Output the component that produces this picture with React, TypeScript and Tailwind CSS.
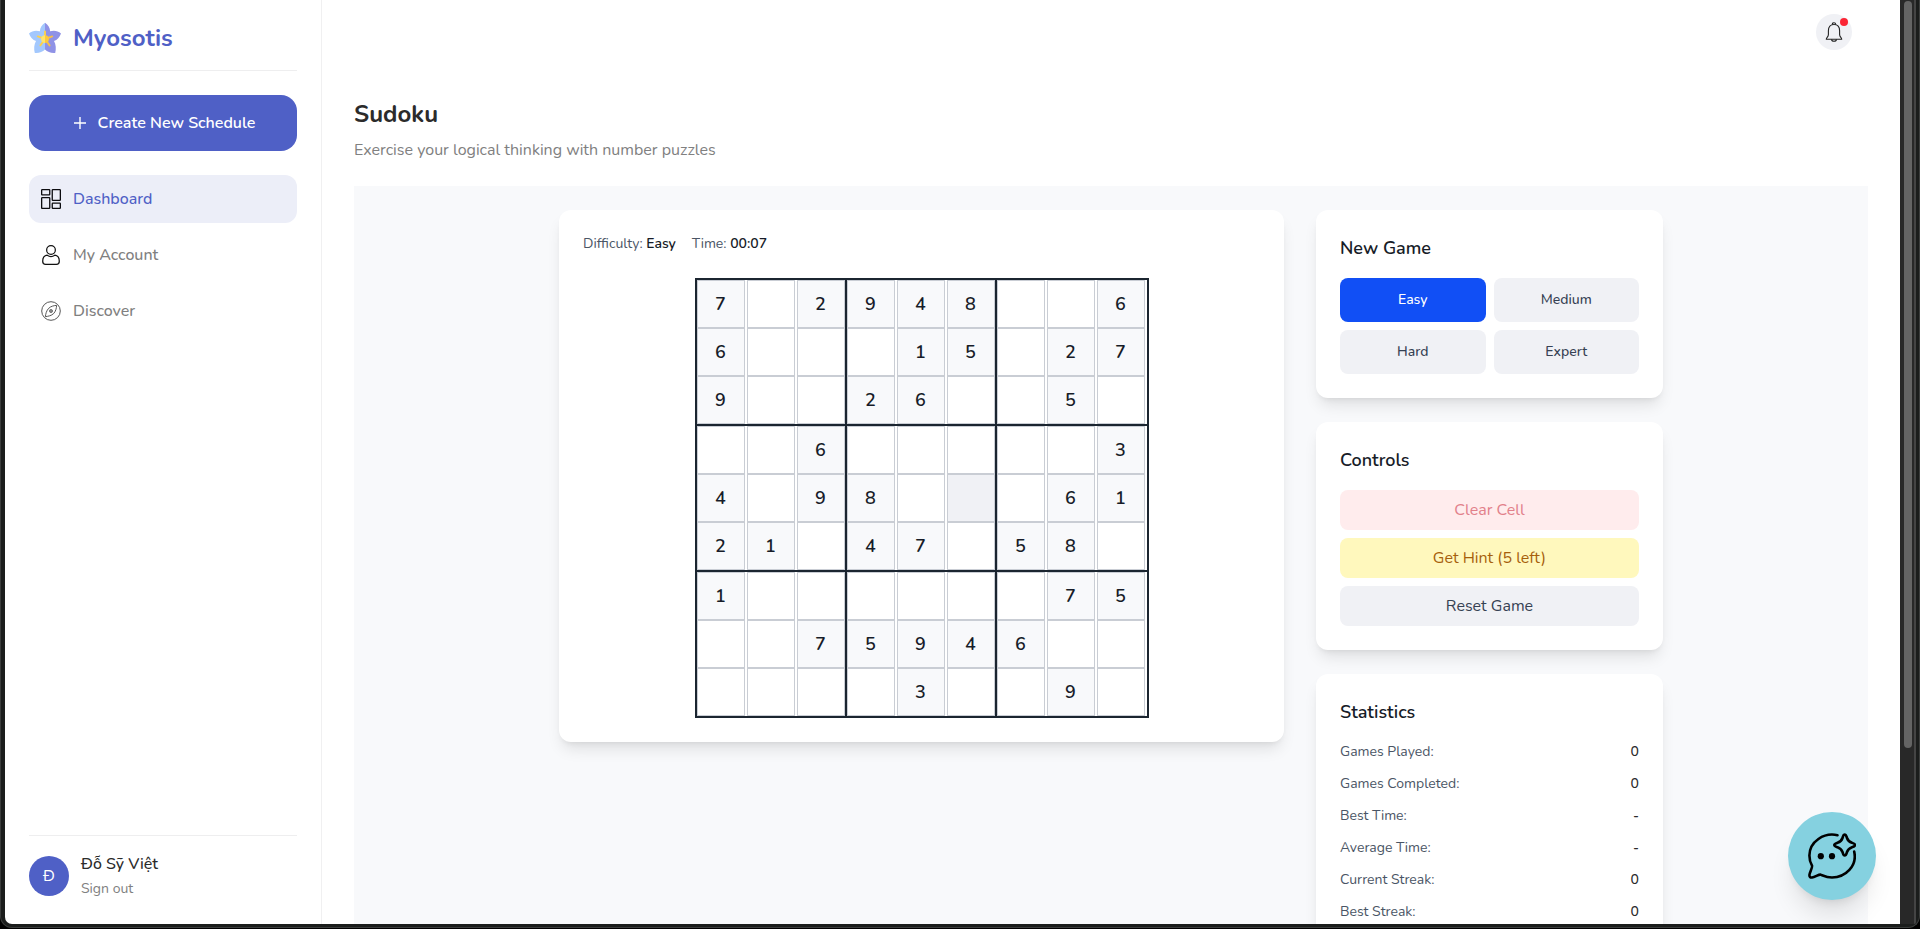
import React from "react";

const PUZZLE = [
  "7.2948..6",
  "6...15.27",
  "9..26..5.",
  "..6.....3",
  "4.98...61",
  "21.47.58.",
  "1......75",
  "..75946..",
  "....3..9.",
];

const STATS: [string, string][] = [
  ["Games Played:", "0"],
  ["Games Completed:", "0"],
  ["Best Time:", "-"],
  ["Average Time:", "-"],
  ["Current Streak:", "0"],
  ["Best Streak:", "0"],
];

function FlowerLogo() {
  return (
    <svg viewBox="0 0 32 32" className="size-8 shrink-0">
      <path d="M16 0.8 C12.800 2.800 11 6 10.900 9.300 C7 8 3 8.800 0 11.400 C1.200 15 3.800 17.800 7 19 C5 22.500 4.700 27 5.800 30.900 C9.800 31.300 13.500 30 16 27.600Z" fill="#a3c8fd" />
      <path d="M16 0.8 C19.200 2.800 21 6 21.100 9.300 C25 8 29 8.800 32 11.400 C30.800 15 28.200 17.800 25 19 C27 22.500 27.300 27 26.200 30.900 C22.200 31.300 18.500 30 16 27.600Z" fill="#8f92e6" />
      <path d="M16 9.500V17L8.800 14.400M16 17L11.400 23.400" stroke="#fbd04f" strokeWidth="1.900" strokeLinecap="round" fill="none" />
      <path d="M16 17L23.200 14.400M16 17L20.600 23.400" stroke="#f7bf47" strokeWidth="1.900" strokeLinecap="round" />
      <path d="M16 13.200A3.900 3.900 0 0 0 16 21Z" fill="#ffe56b" />
      <path d="M16 13.200A3.900 3.900 0 0 1 16 21Z" fill="#fcc93f" />
    </svg>
  );
}

function DashboardIcon() {
  return (
    <svg viewBox="0 0 20 20" className="size-5 shrink-0" fill="none" stroke="#0c0c10" strokeWidth="1.300">
      <rect x="0.650" y="0.650" width="8.100" height="5.200" rx="0.600" />
      <rect x="0.650" y="8.600" width="8.100" height="10.750" rx="0.600" />
      <rect x="11.250" y="0.650" width="8.100" height="10.750" rx="0.600" />
      <rect x="11.250" y="14.150" width="8.100" height="5.200" rx="0.600" />
    </svg>
  );
}

function UserIcon() {
  return (
    <svg viewBox="0 0 20 20" className="size-5 shrink-0" fill="none" stroke="#111" strokeWidth="1.250" strokeLinejoin="round">
      <circle cx="10" cy="5" r="4.350" />
      <path d="M6.200 10.200C3.300 10.600 1.700 13 1.700 16.200C1.700 18.300 2.600 19.350 4.600 19.350H15.400C17.400 19.350 18.300 18.300 18.300 16.200C18.300 13 16.700 10.600 13.800 10.200C12.600 11 11.400 11.500 10 11.500C8.600 11.500 7.400 11 6.200 10.200Z" />
    </svg>
  );
}

function CompassIcon() {
  return (
    <svg viewBox="0 0 20 20" className="size-5 shrink-0" fill="none" stroke="#444" strokeWidth="0.900">
      <circle cx="10" cy="10" r="9.300" />
      <path d="M15.600 4.400C13 4.500 9.700 5.300 7.700 7.300C5.500 9.500 4.600 13 4.400 15.600C7 15.400 10.500 14.700 12.700 12.500C14.700 10.500 15.500 7 15.600 4.400Z" strokeLinejoin="round" />
      <circle cx="10" cy="10" r="1.500" fill="#999" strokeWidth="0.700" />
    </svg>
  );
}

function BellIcon() {
  return (
    <svg viewBox="0 0 20 20" className="size-5" fill="none" stroke="#222" strokeWidth="1.100" strokeLinejoin="round">
      <path d="M2.300 17.300C2.300 15.500 4.400 15.200 4.400 12.500V8.700C4.400 5 6.500 2.500 10 2.500C13.500 2.500 15.600 5 15.600 8.700V12.500C15.600 15.200 17.700 15.500 17.700 17.300Z" />
      <path d="M8.400 2.700V1.900C8.400 .3 11.600 .3 11.600 1.900V2.700M7.500 17.400C7.700 19.900 12.300 19.900 12.500 17.400" />
    </svg>
  );
}

function ChatSparkIcon() {
  return (
    <svg viewBox="0 0 48 46" className="h-[46px] w-12" fill="none" stroke="#000" strokeWidth="2.600" strokeLinecap="round" strokeLinejoin="round">
      <path d="M29.500 2.200C16 -.8 1.500 8.500 1.400 22.500C1.400 27 2.200 29.600 4 32.700C4.800 34.300 1.400 40 1.400 42C1.400 43.800 2.200 44.600 4 44.500C7 44.300 10.200 41.500 12.600 41.600C15 42.500 18.500 44.500 24 44.500C37.500 44.500 49.500 33 46.200 18.600" />
      <path d="M36.500 1.500C38.200 1.500 38.300 3 39 5C40 8 41 8.800 44 9.800C46 10.500 47 10.800 47 12C47 13.300 46 13.500 44 14.200C41 15.200 40 16 39 19C38.300 21 38.200 22.500 36.700 22.500C35.300 22.500 35.200 21 34.500 19C33.500 16 32.500 15.200 29.500 14.200C27.500 13.500 26.300 13.300 26.300 12C26.300 10.800 27.500 10.500 29.500 9.800C32.500 8.800 33.500 8 34.500 5C35.200 3 35.100 1.500 36.500 1.500Z" />
      <circle cx="12.800" cy="23.200" r="3.100" fill="#000" stroke="none" />
      <circle cx="24" cy="23.200" r="3.100" fill="#000" stroke="none" />
    </svg>
  );
}

function Sidebar() {
  return (
    <aside className="flex w-[317px] shrink-0 flex-col border-r border-[#f0f0f1] px-6">
      <div className="flex h-[71px] items-center gap-3 border-b border-[#eeeeef] pt-1.5">
        <FlowerLogo />
        <span className="text-[24px] font-bold text-[#4f60c6]">Myosotis</span>
      </div>
      <button className="mt-6 flex h-14 shrink-0 items-center justify-center gap-3 rounded-2xl bg-[#4f60c6] pl-[3px] text-[16px] font-semibold text-white">
        <svg viewBox="0 0 12 12" className="size-3" stroke="#fff" strokeWidth="1.400">
          <path d="M6 0V12M0 6H12" />
        </svg>
        <span>Create New Schedule</span>
      </button>
      <nav className="mt-6 flex flex-col gap-2 text-[16px] text-[#808080]">
        <a className="flex h-12 items-center gap-3 rounded-xl bg-[#eceef8] px-3 text-[#4f60c6]">
          <DashboardIcon />
          <span className="font-medium">Dashboard</span>
        </a>
        <a className="flex h-12 items-center gap-3 px-3">
          <UserIcon />
          <span className="font-medium">My Account</span>
        </a>
        <a className="flex h-12 items-center gap-3 px-3">
          <CompassIcon />
          <span className="font-medium">Discover</span>
        </a>
      </nav>
      <div className="mt-auto flex h-[89px] gap-3 border-t border-[#eeeeef] pt-5">
        <div className="flex size-10 items-center justify-center rounded-full bg-[#4f60c6] text-[16px] text-white">Đ</div>
        <div className="-mt-1 flex flex-col">
          <span className="text-[16px] leading-6 font-medium text-[#2b2b2b]">Đỗ Sỹ Việt</span>
          <span className="mt-px text-[14px] leading-6 text-[#808080]">Sign out</span>
        </div>
      </div>
    </aside>
  );
}

function Board() {
  return (
    <div className="mx-auto w-[454px] border-2 border-[#1b2530]">
      {PUZZLE.map((row, r) => (
        <div key={r} className={r === 2 || r === 5 ? "flex border-b-2 border-[#1b2530]" : "flex"}>
          {row.split("").map((value, c) => (
            <div key={c} className={c === 2 || c === 5 ? "w-[50px] border-r-2 border-[#1b2530]" : "w-[50px] pr-0.5"}>
              <div
                className={
                  "flex size-12 items-center justify-center border border-[#c9cdd4] text-[18px] font-semibold text-[#171c28] " +
                  (value !== "." ? "bg-[#f8f9fb]" : r === 4 && c === 5 ? "bg-[#f0f1f5]" : "bg-white")
                }
              >
                {value === "." ? "" : value}
              </div>
            </div>
          ))}
        </div>
      ))}
    </div>
  );
}

const CARD = "rounded-xl bg-white p-6 shadow-lg";

function SidePanel() {
  const level = "h-11 rounded-lg bg-[#f0f1f5] pb-px text-[14px] font-medium text-[#364153]";
  const title = "mb-4 text-[18px] leading-7 font-semibold text-[#171c28]";
  return (
    <div className="flex w-[347px] flex-col gap-6">
      <section className={CARD}>
        <h3 className={title}>New Game</h3>
        <div className="grid grid-cols-2 gap-2">
          <button className="h-11 rounded-lg bg-[#114ff5] pb-px text-[14px] font-medium text-white">Easy</button>
          <button className={level}>Medium</button>
          <button className={level}>Hard</button>
          <button className={level}>Expert</button>
        </div>
      </section>
      <section className={CARD}>
        <h3 className={title}>Controls</h3>
        <div className="flex flex-col gap-2 text-[16px]">
          <button className="h-10 rounded-lg bg-[#ffeced] text-[#e2808a]">Clear Cell</button>
          <button className="h-10 rounded-lg bg-[#fff8bd] text-[#a65f0c]">Get Hint (5 left)</button>
          <button className="h-10 rounded-lg bg-[#f0f1f5] text-[#364153]">Reset Game</button>
        </div>
      </section>
      <section className={CARD}>
        <h3 className={title}>Statistics</h3>
        <div className="flex flex-col gap-3 text-[14px] leading-5">
          {STATS.map(([label, value]) => (
            <div key={label} className="flex justify-between">
              <span className="text-[#4a5565]">{label}</span>
              <span className="font-medium text-[#2b2b2b]">{value}</span>
            </div>
          ))}
        </div>
      </section>
    </div>
  );
}

export default function App() {
  return (
    <div className="h-[929px] w-[1920px] overflow-hidden bg-black pb-px font-['Nunito','Lato',sans-serif]">
      <div className="flex h-[928px] w-[1920px] rounded-b-[12px] border-x border-b border-[#3b3d3c] bg-[#1b1d1c] pr-[3px] pb-[3px] pl-1">
        <div className="relative flex w-[1895px] overflow-hidden rounded-bl-[7px] bg-white">
          <Sidebar />
          <main className="flex flex-1 flex-col px-8">
            <div className="flex h-16 shrink-0 items-center justify-end pr-4">
              <div className="relative flex size-9 items-center justify-center rounded-full bg-[#f0f1f5]">
                <BellIcon />
                <span className="absolute top-1 right-1 size-2 rounded-full bg-[#fb2535]" />
              </div>
            </div>
            <h1 className="mt-8 text-[24px] leading-9 font-bold text-[#2b2b2b]">Sudoku</h1>
            <p className="mt-1.5 text-[16px] leading-6 text-[#808080]">Exercise your logical thinking with number puzzles</p>
            <div className="mt-6 flex flex-1 items-start justify-center gap-8 overflow-hidden bg-[#f8f9fb] pt-6">
              <section className={"w-[725px] " + CARD}>
                <div className="mb-6 flex h-5 gap-4 text-[14px] leading-5 text-[#4a5565]">
                  <span>
                    Difficulty: <span className="font-semibold text-[#171c28]">Easy</span>
                  </span>
                  <span>
                    Time: <span className="font-semibold text-[#171c28]">00:07</span>
                  </span>
                </div>
                <Board />
              </section>
              <SidePanel />
            </div>
          </main>
          <button className="absolute right-6 bottom-6 flex size-[88px] items-center justify-center rounded-full bg-[#85d1e0] shadow-xl">
            <ChatSparkIcon />
          </button>
        </div>
        <div className="w-3.5 bg-[#282828] pt-px pl-1">
          <div className="h-[747px] w-2 rounded-full bg-[#646464]" />
        </div>
        <div className="w-0.5 rounded-br-[6px] bg-[#444444]" />
      </div>
    </div>
  );
}
